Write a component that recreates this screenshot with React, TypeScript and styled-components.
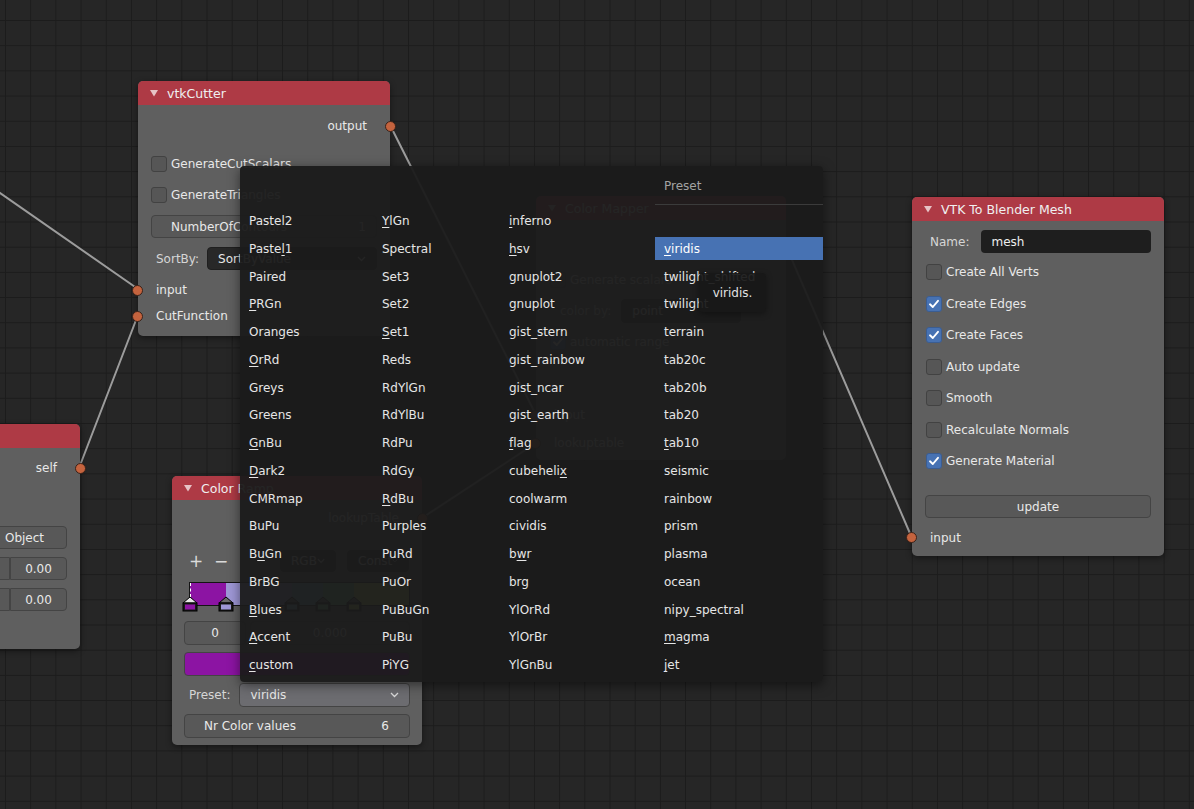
import React from "react";
import styled, { createGlobalStyle } from "styled-components";

const GlobalStyle = createGlobalStyle`
  html, body { margin: 0; padding: 0; background: #262626; }
  body {
    font-family: "DejaVu Sans", "Liberation Sans", sans-serif;
    font-size: 12px;
    color: #e6e6e6;
  }
`;

const Canvas = styled.div`
  position: relative;
  width: 1194px;
  height: 809px;
  overflow: hidden;
  background-color: #262626;
  background-image: linear-gradient(to right, #1c1c1c 1px, transparent 1px),
    linear-gradient(to bottom, #1c1c1c 1px, transparent 1px);
  background-size: 25.2px 25.2px;
  background-position: 5px 20px;
`;

const WireLayer = styled.svg`
  position: absolute;
  left: 0;
  top: 0;
  width: 1194px;
  height: 809px;
  pointer-events: none;
`;

const Node = styled.div<{ $x: number; $y: number; $w: number }>`
  position: absolute;
  left: ${(p) => p.$x}px;
  top: ${(p) => p.$y}px;
  width: ${(p) => p.$w}px;
  background: #5f5f5f;
  border-radius: 5px;
  box-shadow: 0 2px 6px rgba(0, 0, 0, 0.45);
  display: flex;
  flex-direction: column;
`;

const Header = styled.div`
  height: 24px;
  background: #ae3a45;
  border-radius: 5px 5px 0 0;
  display: flex;
  align-items: center;
  gap: 9px;
  padding-left: 12px;
  color: #f0f0f0;
  font-size: 12.5px;
`;

const Body = styled.div<{ $pt: number; $pb: number }>`
  display: flex;
  flex-direction: column;
  padding: ${(p) => p.$pt}px 0 ${(p) => p.$pb}px;
`;

const Row = styled.div<{
  $h?: number;
  $mt?: number;
  $pl?: number;
  $pr?: number;
  $end?: boolean;
  $gap?: number;
}>`
  position: relative;
  display: flex;
  align-items: center;
  justify-content: ${(p) => (p.$end ? "flex-end" : "flex-start")};
  height: ${(p) => p.$h ?? 24}px;
  margin-top: ${(p) => p.$mt ?? 0}px;
  padding: 0 ${(p) => p.$pr ?? 13}px 0 ${(p) => p.$pl ?? 13}px;
  gap: ${(p) => p.$gap ?? 4}px;
  white-space: nowrap;
`;

const Socket = styled.span<{ $side: "left" | "right" }>`
  position: absolute;
  top: 50%;
  ${(p) => (p.$side === "left" ? "left: -6px;" : "right: -6px;")}
  width: 11px;
  height: 11px;
  margin-top: -5.5px;
  border-radius: 50%;
  box-sizing: border-box;
  background: #c4633e;
  border: 1px solid #3a2219;
`;

const Check = styled.span<{ $on?: boolean }>`
  flex: none;
  width: 16px;
  height: 16px;
  box-sizing: border-box;
  border-radius: 3px;
  background: ${(p) => (p.$on ? "#4772b3" : "#565656")};
  border: 1px solid ${(p) => (p.$on ? "#3b5d91" : "#424242")};
  display: inline-flex;
  align-items: center;
  justify-content: center;
`;

const Label = styled.span<{ $dim?: boolean }>`
  color: ${(p) => (p.$dim ? "#d6d6d6" : "#e8e8e8")};
`;

const Field = styled.div<{
  $tone?: "button" | "dark" | "active" | "swatch";
  $w?: number;
  $align?: "center" | "between" | "left";
  $radius?: string;
}>`
  box-sizing: border-box;
  height: 100%;
  ${(p) => (p.$w ? `width: ${p.$w}px; flex: none;` : "flex: 1;")}
  border-radius: ${(p) => p.$radius ?? "4px"};
  display: flex;
  align-items: center;
  justify-content: ${(p) =>
    p.$align === "between" ? "space-between" : p.$align === "left" ? "flex-start" : "center"};
  padding: 0 ${(p) => (p.$align === "center" ? 0 : 10)}px;
  background: ${(p) =>
    p.$tone === "dark"
      ? "#282828"
      : p.$tone === "active"
      ? "#6c6c70"
      : p.$tone === "swatch"
      ? "#8c14a3"
      : "#585858"};
  border: 1px solid ${(p) => (p.$tone === "dark" ? "#1f1f1f" : "#444444")};
  color: #e8e8e8;
`;

const NameField = styled.div`
  flex: 1;
  height: 100%;
  box-sizing: border-box;
  border-radius: 4px;
  background: #1e1e1e;
  display: flex;
  align-items: center;
  padding-left: 10px;
  color: #eeeeee;
`;

const IconGlyph = styled.span`
  width: 14px;
  font-size: 17px;
  line-height: 1;
  color: #dadada;
  text-align: center;
`;

const RampBox = styled.div`
  position: relative;
  margin-left: 17px;
  width: 221px;
  height: 24px;
  box-sizing: border-box;
  border: 1px solid #141414;
  background: linear-gradient(
    to right,
    #8c14a3 0 36px,
    #9e97d6 36px 102px,
    #6fb3c6 102px 133px,
    #7fcf8f 133px 164px,
    #c9d96a 164px 100%
  );
`;

const Marker = styled.svg<{ $x: number }>`
  position: absolute;
  left: ${(p) => p.$x}px;
  top: 13px;
  width: 16px;
  height: 16px;
  overflow: visible;
`;

const ActiveLine = styled.span`
  position: absolute;
  left: 0;
  top: 0;
  height: 14px;
  border-left: 1px dashed #ffffff;
`;

const Menu = styled.div`
  position: absolute;
  left: 240px;
  top: 166px;
  width: 583px;
  height: 516px;
  background: rgba(27, 27, 27, 0.955);
  border-radius: 4px;
  box-shadow: 0 3px 12px rgba(0, 0, 0, 0.5);
  display: flex;
  flex-direction: column;
  z-index: 5;
`;

const MenuHead = styled.div`
  display: flex;
  height: 39px;
  flex: none;
`;

const MenuTitle = styled.div`
  margin-left: 415px;
  width: 168px;
  box-sizing: border-box;
  border-bottom: 1px solid #3b3b3b;
  display: flex;
  align-items: center;
  padding: 1px 0 0 9px;
  color: #a3a3a3;
`;

const MenuGrid = styled.div`
  display: grid;
  grid-template-columns: 133px 127px 155px 168px;
  grid-template-rows: repeat(17, 23px);
  grid-auto-flow: column;
  row-gap: 4.75px;
  padding-top: 4.5px;
`;

const Item = styled.div<{ $active?: boolean }>`
  display: flex;
  align-items: center;
  padding-left: 9px;
  height: 23px;
  white-space: nowrap;
  background: ${(p) => (p.$active ? "#4772b3" : "transparent")};
  color: ${(p) => (p.$active ? "#ffffff" : "#e6e6e6")};
`;

const Key = styled.span`
  text-decoration: underline;
  text-decoration-thickness: 1px;
  text-underline-offset: 2px;
`;

const Tooltip = styled.div`
  position: absolute;
  left: 699px;
  top: 273px;
  width: 67px;
  height: 39px;
  border-radius: 4px;
  background: rgba(24, 24, 24, 0.93);
  box-shadow: 0 2px 6px rgba(0, 0, 0, 0.35);
  display: flex;
  align-items: center;
  justify-content: center;
  padding-top: 1px;
  box-sizing: border-box;
  color: #e2e2e2;
  z-index: 6;
`;

const Collapse = () => (
  <svg width="8" height="7" viewBox="0 0 8 7">
    <path d="M0 0 H8 L4 6.5 Z" fill="#e6c3c6" />
  </svg>
);

const Tick = () => (
  <svg width="12" height="12" viewBox="0 0 12 12">
    <path d="M2 6.3 L4.8 9 L10 2.8" stroke="#fff" strokeWidth="1.9" fill="none" strokeLinecap="round" strokeLinejoin="round" />
  </svg>
);

const Chevron = () => (
  <svg width="9" height="6" viewBox="0 0 9 6">
    <path d="M1 1 L4.5 4.5 L8 1" stroke="#d8d8d8" strokeWidth="1.3" fill="none" />
  </svg>
);

const Mark = ({ x, top, color }: { x: number; top: string; color: string }) => (
  <Marker $x={x} viewBox="0 0 16 16">
    <path d="M1 7 L8 1 L15 7 Z" fill={top} stroke="#000" strokeWidth="1" />
    <rect x="1" y="7" width="14" height="8" fill="#1a1a1a" stroke="#000" />
    <rect x="3" y="8.5" width="10" height="5" fill={color} />
  </Marker>
);

type Entry = [string, number?];

const col1: Entry[] = [["Pastel2"], ["Pastel1", 5], ["Paired"], ["PRGn", 0], ["Oranges"], ["OrRd", 0], ["Greys"], ["Greens"], ["GnBu", 0], ["Dark2", 0], ["CMRmap"], ["BuPu"], ["BuGn", 1], ["BrBG"], ["Blues", 0], ["Accent", 0], ["custom", 0]];
const col2: Entry[] = [["YlGn", 0], ["Spectral"], ["Set3"], ["Set2"], ["Set1", 0], ["Reds"], ["RdYlGn"], ["RdYlBu"], ["RdPu"], ["RdGy"], ["RdBu", 0], ["Purples"], ["PuRd"], ["PuOr"], ["PuBuGn"], ["PuBu"], ["PiYG"]];
const col3: Entry[] = [["inferno", 0], ["hsv", 0], ["gnuplot2"], ["gnuplot"], ["gist_stern"], ["gist_rainbow"], ["gist_ncar"], ["gist_earth"], ["flag", 0], ["cubehelix", 8], ["coolwarm"], ["cividis"], ["bwr", 1], ["brg"], ["YlOrRd"], ["YlOrBr"], ["YlGnBu"]];
const col4: Entry[] = [[""], ["viridis", 0], ["twilight_shifted"], ["twilight"], ["terrain"], ["tab20c"], ["tab20b"], ["tab20"], ["tab10", 0], ["seismic"], ["rainbow"], ["prism"], ["plasma"], ["ocean"], ["nipy_spectral"], ["magma", 0], ["jet", 0]];

const MenuLabel = ({ text, k }: { text: string; k?: number }) =>
  k === undefined ? (
    <>{text}</>
  ) : (
    <>
      {text.slice(0, k)}
      <Key>{text[k]}</Key>
      {text.slice(k + 1)}
    </>
  );

const CheckRow = ({ on, label, mt }: { on?: boolean; label: string; mt: number }) => (
  <Row $mt={mt} $pl={14}>
    <Check $on={on}>{on && <Tick />}</Check>
    <Label>{label}</Label>
  </Row>
);

export default function App() {
  const all = [...col1, ...col2, ...col3, ...col4];
  return (
    <>
      <GlobalStyle />
      <Canvas>
        <WireLayer viewBox="0 0 1194 809">
          <g stroke="#9c9c9c" strokeWidth="2" strokeLinecap="round" fill="none">
            <line x1="-10" y1="186" x2="138" y2="289" />
            <line x1="79" y1="468" x2="138" y2="315" />
            <line x1="390" y1="125" x2="536" y2="415" />
            <line x1="422" y1="518" x2="536" y2="443" />
            <line x1="786" y1="246" x2="912" y2="538" />
          </g>
        </WireLayer>

        {/* vtkCutter */}
        <Node $x={138} $y={81} $w={252}>
          <Header>
            <Collapse />
            <span>vtkCutter</span>
          </Header>
          <Body $pt={10} $pb={8}>
            <Row $h={22} $end $pr={23}>
              <Label>output</Label>
              <Socket $side="right" />
            </Row>
            <Row $mt={15}>
              <Check />
              <Label>GenerateCutScalars</Label>
            </Row>
            <Row $mt={7}>
              <Check />
              <Label>GenerateTriangles</Label>
            </Row>
            <Row $h={23} $mt={8}>
              <Field $align="between">
                <span style={{ paddingLeft: 9 }}>NumberOfContours</span>
                <span>1</span>
              </Field>
            </Row>
            <Row $h={23} $mt={9} $pl={18} $gap={8}>
              <Label $dim>SortBy:</Label>
              <Field $tone="dark" $align="between">
                <span>SortByValue</span>
                <Chevron />
              </Field>
            </Row>
            <Row $mt={8} $pl={18}>
              <Label>input</Label>
              <Socket $side="left" />
            </Row>
            <Row $mt={2} $pl={18}>
              <Label>CutFunction</Label>
              <Socket $side="left" />
            </Row>
          </Body>
        </Node>

        {/* partial node on the left */}
        <Node $x={-172} $y={424} $w={252}>
          <Header>
            <Collapse />
            <span>vtkPlane</span>
          </Header>
          <Body $pt={9} $pb={38}>
            <Row $h={22} $end $pr={23}>
              <Label>self</Label>
              <Socket $side="right" />
            </Row>
            <Row $h={23} $mt={47} $gap={0}>
              <Field $radius="4px 0 0 4px">World</Field>
              <Field $w={85} $radius="0 4px 4px 0">Object</Field>
            </Row>
            <Row $h={23} $mt={8} $gap={0}>
              <Field $radius="4px 0 0 4px">Origin X</Field>
              <Field $w={57} $radius="0 4px 4px 0">0.00</Field>
            </Row>
            <Row $h={23} $mt={8} $gap={0}>
              <Field $radius="4px 0 0 4px">Origin Y</Field>
              <Field $w={57} $radius="0 4px 4px 0">0.00</Field>
            </Row>
          </Body>
        </Node>

        {/* Color Ramp */}
        <Node $x={172} $y={476} $w={250}>
          <Header>
            <Collapse />
            <span>Color Ramp</span>
          </Header>
          <Body $pt={7} $pb={7}>
            <Row $h={22} $end $pr={23}>
              <Label>lookupTable</Label>
              <Socket $side="right" />
            </Row>
            <Row $h={22} $mt={21} $pl={17} $gap={11}>
              <IconGlyph>+</IconGlyph>
              <IconGlyph>−</IconGlyph>
              <span style={{ flex: 1 }} />
              <Field $tone="dark" $w={56} $align="between">
                <span>RGB</span>
                <Chevron />
              </Field>
              <Field $tone="dark" $w={62} $align="between">
                <span>Const</span>
                <Chevron />
              </Field>
            </Row>
            <Row $h={24} $mt={10} $pl={0} $pr={0}>
              <RampBox>
                <ActiveLine />
                <Mark x={-8} top="#e8e8e8" color="#8c14a3" />
                <Mark x={28} top="#6a6a6a" color="#9e97d6" />
                <Mark x={94} top="#6a6a6a" color="#6fb3c6" />
                <Mark x={125} top="#6a6a6a" color="#7fcf8f" />
                <Mark x={156} top="#6a6a6a" color="#c9d96a" />
              </RampBox>
            </Row>
            <Row $h={24} $mt={15} $pl={12} $pr={12}>
              <Field $w={62}>0</Field>
              <Field>0.000</Field>
            </Row>
            <Row $h={24} $mt={7} $pl={12} $pr={12}>
              <Field $tone="swatch" />
            </Row>
            <Row $h={24} $mt={7} $pl={17} $pr={12} $gap={9}>
              <Label $dim>Preset:</Label>
              <Field $tone="active" $align="between">
                <span>viridis</span>
                <Chevron />
              </Field>
            </Row>
            <Row $h={24} $mt={7} $pl={12} $pr={12}>
              <Field $align="between">
                <span style={{ paddingLeft: 9 }}>Nr Color values</span>
                <span style={{ paddingRight: 10 }}>6</span>
              </Field>
            </Row>
          </Body>
        </Node>

        {/* Color Mapper (under the menu) */}
        <Node $x={536} $y={196} $w={250}>
          <Header>
            <Collapse />
            <span>Color Mapper</span>
          </Header>
          <Body $pt={15} $pb={5}>
            <Row $h={22} $end $pr={23}>
              <Label>output</Label>
              <Socket $side="right" />
            </Row>
            <CheckRow label="Generate scalars" mt={11} />
            <Row $mt={7} $pl={24} $gap={10}>
              <Label $dim>color by:</Label>
              <Field $tone="dark" $w={120} $align="left">
                point
              </Field>
            </Row>
            <CheckRow on label="automatic range" mt={7} />
            <Row $mt={49} $pl={18}>
              <Label>input</Label>
              <Socket $side="left" />
            </Row>
            <Row $mt={4} $pl={18}>
              <Label>lookuptable</Label>
              <Socket $side="left" />
            </Row>
          </Body>
        </Node>

        {/* VTK To Blender Mesh */}
        <Node $x={912} $y={197} $w={252}>
          <Header>
            <Collapse />
            <span>VTK To Blender Mesh</span>
          </Header>
          <Body $pt={9} $pb={7}>
            <Row $h={23} $pl={18} $gap={12}>
              <Label $dim>Name:</Label>
              <NameField>mesh</NameField>
            </Row>
            <CheckRow label="Create All Verts" mt={7} />
            <CheckRow on label="Create Edges" mt={7.5} />
            <CheckRow on label="Create Faces" mt={7.5} />
            <CheckRow label="Auto update" mt={7.5} />
            <CheckRow label="Smooth" mt={7.5} />
            <CheckRow label="Recalculate Normals" mt={7.5} />
            <CheckRow on label="Generate Material" mt={7.5} />
            <Row $h={23} $mt={22}>
              <Field>update</Field>
            </Row>
            <Row $h={23} $mt={8} $pl={18}>
              <Label>input</Label>
              <Socket $side="left" />
            </Row>
          </Body>
        </Node>

        <Menu>
          <MenuHead>
            <MenuTitle>Preset</MenuTitle>
          </MenuHead>
          <MenuGrid>
            {all.map(([text, k], i) => (
              <Item key={i} $active={text === "viridis"}>
                <MenuLabel text={text} k={k} />
              </Item>
            ))}
          </MenuGrid>
        </Menu>
        <Tooltip>viridis.</Tooltip>
      </Canvas>
    </>
  );
}
